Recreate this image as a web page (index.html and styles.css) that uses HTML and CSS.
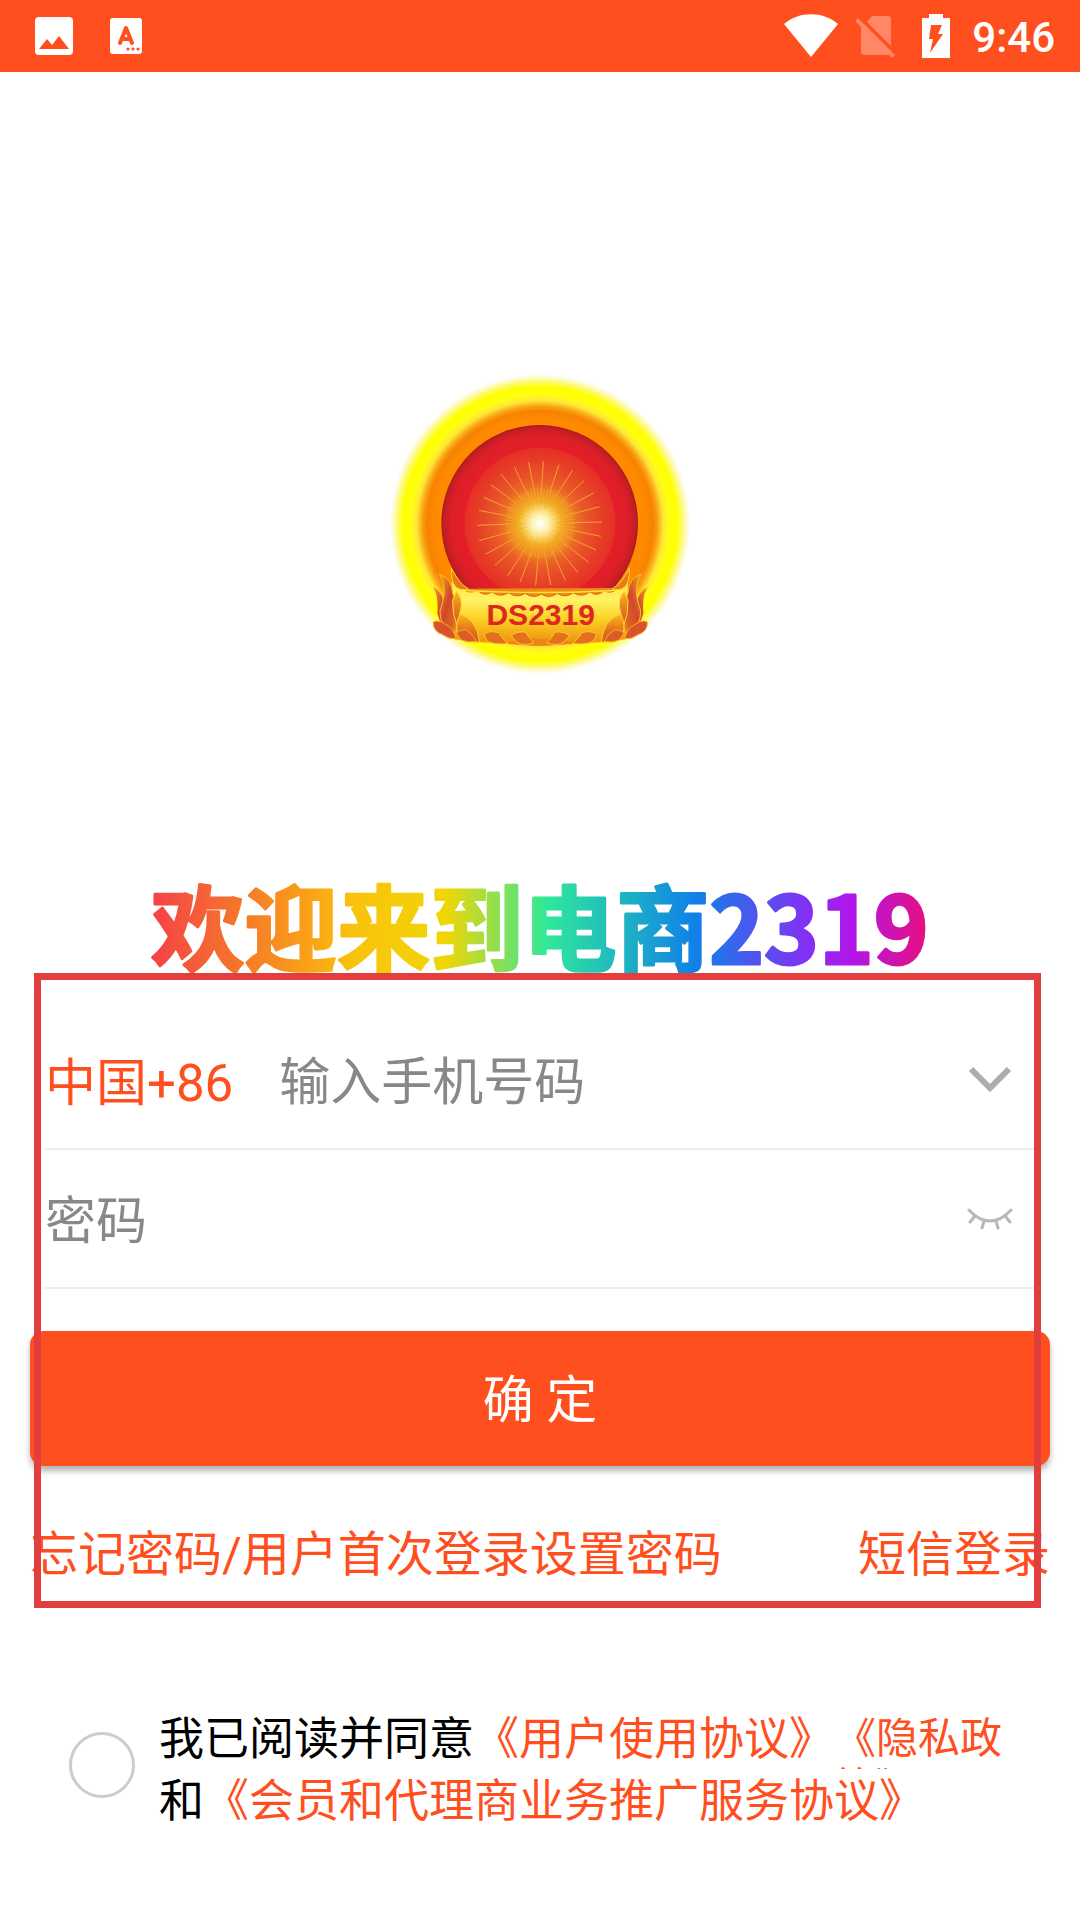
FILE: index.html
```html
<!DOCTYPE html>
<html lang="zh-CN">
<head>
  <meta charset="UTF-8">
  <meta name="viewport" content="width=device-width, initial-scale=1.0">
  <title>登录 - 电商2319</title>
  <link rel="stylesheet" href="styles.css">
</head>
<body>
  <header class="status-bar">
    <div class="status-left">
      <svg width="38" height="38" viewBox="0 0 38 38">
        <rect width="38" height="38" rx="4" fill="#fff"/>
        <path d="M4 32L12 22L17 28L24 19L34 32Z" fill="#ff4f1e"/>
      </svg>
      <svg width="32" height="36" viewBox="0 0 32 36">
        <rect width="32" height="36" rx="3" fill="#fff"/>
        <path d="M10 25L16 10L22 25M12 21H20" fill="none" stroke="#ff4f1e" stroke-width="4" stroke-linecap="round" stroke-linejoin="round"/>
        <g fill="#ff4f1e"><circle cx="18" cy="31" r="1.6"/><circle cx="23" cy="31" r="1.6"/><circle cx="28" cy="31" r="1.6"/></g>
      </svg>
    </div>
    <div class="status-right">
      <svg width="54" height="44" viewBox="0 0 54 44">
        <path d="M0 10C15 -3 39 -3 54 10L27 43Z" fill="#fff"/>
      </svg>
      <svg width="40" height="44" viewBox="0 0 40 44">
        <g fill="#ff8768">
          <path d="M16 2H32Q35 2 35 5V32L11 8Z"/>
          <path d="M5 11L34 40Q33 41 31 41H8Q5 41 5 38Z"/>
          <path d="M2 4L39 41L36 44L-1 7Z"/>
        </g>
      </svg>
      <svg class="battery" width="28" height="44" viewBox="0 0 28 44">
        <path d="M7 0H21V4H28V44H0V4H7Z" fill="#fff"/>
        <path d="M9 11H20L16 20H21L8 39L11 25H7Z" fill="#ff4f1e"/>
      </svg>
      <span class="time">9:46</span>
    </div>
  </header>

  <main>
    <div class="logo">
      <svg width="320" height="320" viewBox="0 0 960 960" role="img" aria-label="DS2319">
        <defs>
          <radialGradient id="halo">
            <stop offset="0.7" stop-color="#ff8a00"/>
            <stop offset="0.75" stop-color="#f78200"/>
            <stop offset="0.78" stop-color="#f9a012"/>
            <stop offset="0.82" stop-color="#ffe838"/>
            <stop offset="0.86" stop-color="#ffff10"/>
            <stop offset="0.91" stop-color="#ffff00"/>
            <stop offset="0.95" stop-color="#fdf850" stop-opacity="0.75"/>
            <stop offset="1" stop-color="#fff0b0" stop-opacity="0"/>
          </radialGradient>
          <radialGradient id="disc">
            <stop offset="0.76" stop-color="#e61e28"/>
            <stop offset="0.9" stop-color="#dc1f28"/>
            <stop offset="0.98" stop-color="#c41c24"/>
            <stop offset="1" stop-color="#a01a1c"/>
          </radialGradient>
          <radialGradient id="inner">
            <stop offset="0" stop-color="#f08a24"/>
            <stop offset="0.6" stop-color="#e9582a"/>
            <stop offset="0.85" stop-color="#e63c26"/>
            <stop offset="1" stop-color="#e63026"/>
          </radialGradient>
          <radialGradient id="sun">
            <stop offset="0" stop-color="#ffffff"/>
            <stop offset="0.14" stop-color="#fff3b8"/>
            <stop offset="0.32" stop-color="#f8d05c"/>
            <stop offset="0.45" stop-color="#f3b024"/>
            <stop offset="0.7" stop-color="#f08a22" stop-opacity="0.8"/>
            <stop offset="1" stop-color="#ea5a28" stop-opacity="0"/>
          </radialGradient>
          <radialGradient id="glow">
            <stop offset="0" stop-color="#ffffff"/>
            <stop offset="0.3" stop-color="#fff6c8"/>
            <stop offset="0.65" stop-color="#fbdc78" stop-opacity="0.8"/>
            <stop offset="1" stop-color="#f6c040" stop-opacity="0"/>
          </radialGradient>
          <linearGradient id="gold" x1="0" y1="0" x2="0" y2="1">
            <stop offset="0" stop-color="#ffe83a"/>
            <stop offset="0.3" stop-color="#fff265"/>
            <stop offset="0.6" stop-color="#fbcf22"/>
            <stop offset="1" stop-color="#ee8a10"/>
          </linearGradient>
          <linearGradient id="flame" x1="0" y1="0" x2="1" y2="1">
            <stop offset="0" stop-color="#f6a81c"/>
            <stop offset="0.45" stop-color="#d3482c"/>
            <stop offset="0.75" stop-color="#dc6422"/>
            <stop offset="1" stop-color="#f5b420"/>
          </linearGradient>
          <linearGradient id="petal" x1="0" y1="0" x2="0" y2="1">
            <stop offset="0" stop-color="#f8b81e"/>
            <stop offset="0.5" stop-color="#e87a1c"/>
            <stop offset="1" stop-color="#d4502a"/>
          </linearGradient>
          <!-- one side of the lotus base, mirrored below -->
          <g id="leaves">
            <path d="M214 625Q238 672 265 686Q246 694 228 682Q212 664 214 625Z" fill="#e97a18" stroke="#ffd62a" stroke-width="3"/>
            <path d="M157 680Q186 694 190 724Q202 780 212 830Q180 796 172 760Q176 700 157 680Z" fill="url(#flame)"/>
            <path d="M178 642Q216 654 218 700Q238 740 234 790Q230 814 216 828Q178 794 180 752Q196 706 192 682Q190 660 178 642Z" fill="url(#flame)" stroke="#f9c022" stroke-width="3"/>
            <path d="M228 694Q248 710 243 744L232 800Q216 760 218 722Z" fill="url(#petal)" stroke="#ffdc2c" stroke-width="3"/>
            <path d="M160 786Q176 778 198 794Q220 804 228 836Q206 838 188 824Q158 814 160 786Z" fill="#d7532b" stroke="#f9ac20" stroke-width="3"/>
            <path d="M240 762Q292 778 298 846Q262 850 236 828Q222 796 240 762Z" fill="url(#petal)" stroke="#ffd428" stroke-width="3"/>
            <path d="M230 820Q240 808 258 810Q280 822 290 844Q264 850 244 840Z" fill="#dc5c28" stroke="#f9ac20" stroke-width="3"/>
            <path d="M312 824Q326 810 356 818Q368 838 384 850Q348 856 322 844Z" fill="#e2701e" stroke="#ffc824" stroke-width="3"/>
            <path d="M394 828Q406 814 436 816Q446 834 462 848Q430 860 410 846Z" fill="#e2701e" stroke="#ffc824" stroke-width="3"/>
          </g>
        </defs>
        <circle cx="480" cy="492" r="452" fill="url(#halo)"/>
        <circle cx="479" cy="490" r="295" fill="url(#disc)"/>
        <circle cx="480" cy="490" r="226" fill="url(#inner)"/>
        <circle cx="480" cy="490" r="140" fill="url(#sun)"/>
        <circle cx="480" cy="490" r="70" fill="none" stroke="#f6c22c" stroke-opacity="0.4" stroke-width="70" stroke-dasharray="2 5"/>
        <path d="M480 460L490 304M492 450L537 314M500 450L578 331M508 460L613 361M512 468L641 399M516 478L659 440M518 489L666 486M516 498L662 529M512 508L648 570M508 516L626 607M500 522L594 638M494 526L557 662M486 530L512 675M479 530L467 677M472 530L420 667M462 526L382 649M454 518L345 616M448 510L316 583M444 500L298 542M442 490L292 496M444 480L297 451M448 472L311 412M454 464L333 374M460 458L362 342M466 454L403 321M474 452L446 306" fill="none" stroke="#f3a42a" stroke-width="3"/>
        <circle cx="480" cy="490" r="66" fill="url(#glow)"/>
        <path d="M214 665Q236 688 275 690Q480 708 685 690Q724 688 744 665L738 838Q480 872 222 838Z" fill="url(#gold)"/>
        <path d="M250 686Q268 704 292 690Q312 712 336 696Q360 714 386 698Q410 716 436 700Q460 718 484 702Q508 718 532 700Q556 716 580 698Q604 714 630 696Q652 712 672 692Q696 704 712 684" fill="#ee8a18" stroke="#d9661a" stroke-width="3"/>
        <path d="M228 680Q250 694 290 693Q480 702 670 693Q710 694 732 680" fill="none" stroke="#ffe234" stroke-width="4"/>
        <path d="M380 850Q430 830 480 838Q530 830 580 850Q480 866 380 850Z" fill="#ee8416"/>
        <use href="#leaves"/>
        <use href="#leaves" transform="translate(962 0) scale(-1 1)"/>
        <text class="logo-text" x="482" y="795" text-anchor="middle">DS2319</text>
      </svg>
    </div>

    <h1 class="welcome">
      <svg width="800" height="100" viewBox="0 0 800 100">
        <defs>
          <linearGradient id="rainbow" gradientUnits="userSpaceOnUse" x1="10" y1="0" x2="790" y2="0">
            <stop offset="0" stop-color="#f5404a"/>
            <stop offset="0.1" stop-color="#f5702e"/>
            <stop offset="0.2" stop-color="#f9a018"/>
            <stop offset="0.26" stop-color="#fac20c"/>
            <stop offset="0.38" stop-color="#f0d606"/>
            <stop offset="0.51" stop-color="#2ee89a"/>
            <stop offset="0.7" stop-color="#1080e8"/>
            <stop offset="0.85" stop-color="#8a2cf4"/>
            <stop offset="0.9" stop-color="#b216e8"/>
            <stop offset="1" stop-color="#e8107c"/>
          </linearGradient>
        </defs>
        <text class="welcome-text" x="400" y="89" text-anchor="middle">欢迎来到电商2319</text>
      </svg>
    </h1>

    <form class="login">
      <div class="row">
        <button type="button" class="country">中国+86</button>
        <input type="tel" placeholder="输入手机号码" aria-label="手机号码">
        <button type="button" class="icon-btn" aria-label="展开">
          <svg width="46" height="30" viewBox="0 0 46 30">
            <path d="M4 4L23 23L42 4" fill="none" stroke="#adadad" stroke-width="6"/>
          </svg>
        </button>
      </div>
      <div class="row">
        <input type="password" placeholder="密码" aria-label="密码">
        <button type="button" class="icon-btn" aria-label="显示密码">
          <svg width="46" height="24" viewBox="0 0 46 24">
            <path d="M2 3Q12 14 23 14Q34 14 44 3M8 9L3 15M38 9L43 15M17 14L15 21M29 14L31 21" fill="none" stroke="#b8b8b8" stroke-width="3" stroke-linecap="round"/>
          </svg>
        </button>
      </div>
      <button type="submit" class="btn-submit">确 定</button>
      <div class="links">
        <a href="#">忘记密码/用户首次登录设置密码</a>
        <a href="#">短信登录</a>
      </div>
      <div class="frame"></div>
    </form>

    <div class="agreement">
      <input type="checkbox" id="agree">
      <p>
        <label for="agree">我已阅读并同意</label><a href="#">《用户使用协议》</a><a href="#" class="privacy">《隐私政策》</a><br>
        和<a href="#">《会员和代理商业务推广服务协议》</a>
      </p>
    </div>
  </main>
</body>
</html>
```
FILE: styles.css
```css
* {
  box-sizing: border-box;
}

body {
  margin: 0;
  background-color: #fff;
  font-family: Roboto, "Noto Sans CJK SC", sans-serif;
  color: #000;
  text-spacing-trim: space-all;
}

svg {
  display: block;
}

a {
  color: #ff4f1e;
  text-decoration: none;
}

button, input {
  font-family: inherit;
  font-size: 51px;
  border: none;
  padding: 0;
  background: none;
}

button {
  cursor: pointer;
}

/* Status bar */
.status-bar {
  display: flex;
  justify-content: space-between;
  align-items: center;
  height: 72px;
  padding: 0 25px 0 35px;
  background-color: #ff4f1e;
}

.status-left, .status-right {
  display: flex;
  align-items: center;
}

.status-left {
  gap: 37px;
}

.status-right {
  gap: 18px;
}

.battery {
  margin: 0 4px 0 8px;
}

.time {
  padding-top: 2px;
  color: #fff;
  font-size: 42px;
  font-weight: 500;
}

/* Logo and title */
.logo {
  display: flex;
  justify-content: center;
  padding-top: 288px;
}

.logo-text {
  font-family: "Liberation Sans", sans-serif;
  font-size: 90px;
  font-weight: bold;
  fill: #dc281e;
}

.welcome {
  display: flex;
  justify-content: center;
  margin: 195px 0 0;
}

.welcome svg {
  overflow: visible;
}

.welcome-text {
  font-family: "Noto Sans CJK SC", sans-serif;
  font-size: 93px;
  font-weight: 700;
  fill: url(#rainbow);
  stroke: url(#rainbow);
  stroke-width: 3px;
  stroke-linejoin: round;
}

/* Login form */
.login {
  position: relative;
  padding: 36px 30px 20px;
}

.row {
  display: flex;
  align-items: center;
  height: 139px;
  margin: 0 15px;
  padding-right: 22px;
  border-bottom: 2px solid #eee;
}

.row input {
  flex: 1;
  min-width: 0;
  padding-top: 6px;
  outline: none;
}

.row input::placeholder {
  color: #888;
}

.country {
  margin-right: 46px;
  padding-bottom: 2px;
  color: #ff4f1e;
}

.btn-submit {
  display: block;
  width: 100%;
  height: 135px;
  margin-top: 42px;
  padding-bottom: 5px;
  border-radius: 14px;
  background-color: #ff4f1e;
  box-shadow: 0 5px 6px rgba(0, 0, 0, 0.3);
  color: #fff;
}

.links {
  display: flex;
  justify-content: space-between;
  margin-top: 56px;
  font-size: 48px;
  line-height: 66px;
}

.frame {
  position: absolute;
  top: -2px;
  right: 39px;
  bottom: 0;
  left: 34px;
  border: 7px solid #e33e3e;
  pointer-events: none;
}

/* Agreement */
.agreement {
  display: flex;
  align-items: flex-start;
  gap: 24px;
  padding: 101px 40px 80px 69px;
}

.agreement input {
  appearance: none;
  flex: none;
  width: 66px;
  height: 66px;
  margin: 23px 0 0;
  border: 3px solid #ccc;
  border-radius: 50%;
}

.agreement input:checked {
  background-color: #ff4f1e;
}

.agreement p {
  margin: 0;
  font-size: 45px;
  line-height: 62px;
}

.privacy {
  display: inline-block;
  width: 170px;
  height: 60px;
  padding-top: 5px;
  overflow: hidden;
  vertical-align: top;
  font-size: 42px;
  line-height: 50px;
  word-break: break-all;
}
```
